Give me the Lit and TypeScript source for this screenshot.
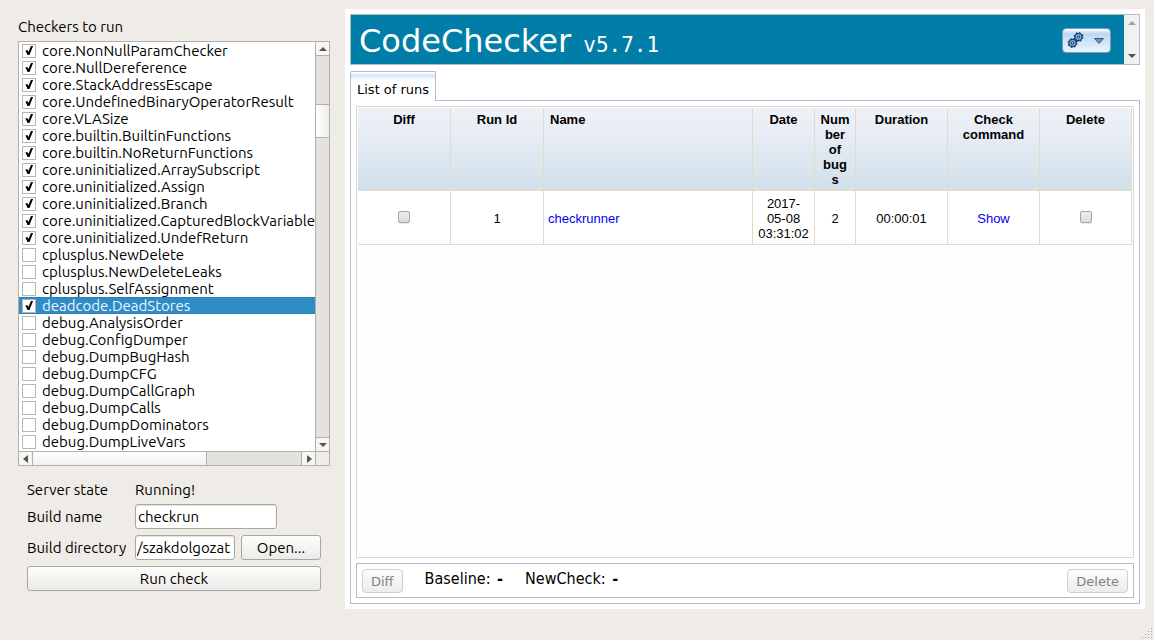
import { LitElement, html, css, svg } from "lit";
import { customElement, state } from "lit/decorators.js";
import { classMap } from "lit/directives/class-map.js";

interface Checker {
  name: string;
  on: boolean;
}

const CHECKED = [
  "core.NonNullParamChecker",
  "core.NullDereference",
  "core.StackAddressEscape",
  "core.UndefinedBinaryOperatorResult",
  "core.VLASize",
  "core.builtin.BuiltinFunctions",
  "core.builtin.NoReturnFunctions",
  "core.uninitialized.ArraySubscript",
  "core.uninitialized.Assign",
  "core.uninitialized.Branch",
  "core.uninitialized.CapturedBlockVariable",
  "core.uninitialized.UndefReturn",
  "deadcode.DeadStores",
];

const CHECKERS: Checker[] = [
  ...CHECKED.slice(0, 12),
  "cplusplus.NewDelete",
  "cplusplus.NewDeleteLeaks",
  "cplusplus.SelfAssignment",
  "deadcode.DeadStores",
  "debug.AnalysisOrder",
  "debug.ConfigDumper",
  "debug.DumpBugHash",
  "debug.DumpCFG",
  "debug.DumpCallGraph",
  "debug.DumpCalls",
  "debug.DumpDominators",
  "debug.DumpLiveVars",
].map((name) => ({ name, on: CHECKED.includes(name) }));

const arrow = (d: string, w = 8, h = 8) => html`
  <svg width=${w} height=${h} viewBox="0 0 ${w} ${h}" aria-hidden="true">
    <path d=${d} fill="currentColor"></path>
  </svg>
`;
const UP = "M0 6 L4 2 L8 6 Z";
const DOWN = "M0 2 L8 2 L4 6 Z";
const LEFT = "M6 0 L6 8 L1 4 Z";
const RIGHT = "M2 0 L7 4 L2 8 Z";

/* Check list with its scroll bars. */
@customElement("checker-list")
export class CheckerList extends LitElement {
  @state() private selected = "deadcode.DeadStores";

  static styles = css`
    :host {
      display: grid;
      grid-template-columns: minmax(0, 1fr) 14px;
      grid-template-rows: auto 14px;
      border: 1px solid #b3afab;
      background: #fff;
    }
    .rows {
      list-style: none;
      margin: 0;
      padding: 0 0 1px;
      overflow: hidden;
    }
    .row {
      display: flex;
      align-items: center;
      gap: 6px;
      height: 17px;
      padding-left: 3px;
      line-height: 17px;
      white-space: nowrap;
    }
    .row.selected {
      background: #308cc6;
      box-shadow: inset 0 1px #2a7fb5, inset 0 -1px #2a7fb5;
      color: #eef5fa;
    }
    .box {
      appearance: none;
      flex: none;
      box-sizing: border-box;
      width: 14px;
      height: 14px;
      margin: 0;
      border: 1px solid #b9b5b0;
      background: #fff;
    }
    .box:checked::before {
      content: "";
      display: block;
      width: 12px;
      height: 12px;
      background: #000;
      clip-path: polygon(20% 50%, 36% 46%, 45% 62%, 66% 12%, 84% 12%, 54% 88%, 38% 88%);
    }
    .bar {
      display: flex;
      background: #e3e2df;
    }
    .vertical {
      flex-direction: column;
      border-left: 1px solid #b3afab;
      width: 13px;
    }
    .horizontal {
      border-top: 1px solid #b3afab;
      height: 13px;
    }
    .corner {
      border-top: 1px solid #b3afab;
      border-left: 1px solid #b3afab;
      background: #efebe7;
    }
    .step {
      display: flex;
      align-items: center;
      justify-content: center;
      flex: none;
      width: 13px;
      height: 13px;
      border: 0;
      padding: 0;
      background: #f7f6f5;
      color: #555;
    }
    .track {
      display: flex;
      flex: 1;
    }
    .vertical .track {
      flex-direction: column;
      border-top: 1px solid #b3afab;
      border-bottom: 1px solid #b3afab;
    }
    .horizontal .track {
      border-left: 1px solid #b3afab;
      border-right: 1px solid #b3afab;
    }
    .before {
      flex: 48;
    }
    .after {
      flex: 300;
    }
    .vertical .thumb {
      flex: 32;
      border-top: 1px solid #b3afab;
      border-bottom: 1px solid #b3afab;
      background: linear-gradient(90deg, #fff, #eeedec);
    }
    .horizontal .thumb {
      flex: 0 0 65%;
      box-sizing: border-box;
      border-right: 1px solid #b3afab;
      background: linear-gradient(#fff, #f2f0ee);
    }
  `;

  render() {
    return html`
      <ul class="rows">
        ${CHECKERS.map(
          (c) => html`<li>
            <label
              class=${classMap({ row: true, selected: c.name === this.selected })}
              @click=${() => (this.selected = c.name)}
              ><input class="box" type="checkbox" .checked=${c.on} /><span>${c.name}</span></label
            >
          </li>`
        )}
      </ul>
      <div class="bar vertical">
        <button class="step" aria-label="Scroll up">${arrow(UP)}</button>
        <div class="track">
          <div class="before"></div>
          <div class="thumb"></div>
          <div class="after"></div>
        </div>
        <button class="step" aria-label="Scroll down">${arrow(DOWN)}</button>
      </div>
      <div class="bar horizontal">
        <button class="step" aria-label="Scroll left">${arrow(LEFT)}</button>
        <div class="track"><div class="thumb"></div></div>
        <button class="step" aria-label="Scroll right">${arrow(RIGHT)}</button>
      </div>
      <div class="corner"></div>
    `;
  }
}

/* Build settings under the list. */
@customElement("build-form")
export class BuildForm extends LitElement {
  static styles = css`
    :host {
      display: block;
      padding: 0 9px;
    }
    .form {
      display: grid;
      grid-template-columns: 102px minmax(0, 1fr);
      column-gap: 6px;
      row-gap: 6px;
      align-items: center;
      margin: 0;
    }
    .state {
      line-height: 20px;
      margin-bottom: -2px;
    }
    .label {
      white-space: nowrap;
    }
    .pair {
      display: grid;
      grid-template-columns: minmax(0, 1fr) 80px;
      gap: 6px;
    }
    .text,
    .button {
      box-sizing: border-box;
      height: 25px;
      border: 1px solid #aaa6a2;
      border-radius: 3px;
      font: inherit;
      color: #000;
    }
    .text {
      width: 100%;
      padding: 0 2px;
      background: #fff;
      box-shadow: inset 0 1px 1px #e4e2e0;
    }
    .name {
      width: 142px;
    }
    .directory {
      padding: 0 1px;
    }
    .button {
      padding: 0;
      background: linear-gradient(#fdfdfd, #edebe9);
    }
    .run {
      grid-column: 1 / -1;
    }
  `;

  render() {
    return html`
      <form class="form" @submit=${(e: Event) => e.preventDefault()}>
        <span class="state">Server state</span>
        <span class="state">Running!</span>
        <label class="label" for="name">Build name</label>
        <input class="text name" id="name" type="text" value="checkrun" />
        <label class="label" for="directory">Build directory</label>
        <div class="pair">
          <input class="text directory" id="directory" type="text" value="/szakdolgozat" />
          <button class="button" type="button">Open...</button>
        </div>
        <button class="button run" type="submit">Run check</button>
      </form>
    `;
  }
}

const gear = (x: number, y: number) => svg`
  <g transform="translate(${x} ${y})">
    <circle r="3.6" fill="#7fa8d2" stroke="#17406e" stroke-width="1.2"></circle>
    <circle r="4.3" fill="none" stroke="#17406e" stroke-width="1.2" stroke-dasharray="1.7 1.68"></circle>
    <circle r="1.2" fill="#c7dcf3" stroke="#17406e" stroke-width="1"></circle>
  </g>
`;

/* Embedded web page: banner, tab and the table of runs. */
@customElement("runs-view")
export class RunsView extends LitElement {
  static styles = css`
    :host {
      display: flex;
      flex-direction: column;
      box-sizing: border-box;
      padding: 5px;
      background: #fff;
      font: 13px/15px "DejaVu Sans", sans-serif;
    }
    .banner {
      display: flex;
      border: 1px solid #b5bcc7;
      background: #007ea7;
      color: #fff;
    }
    .title {
      flex: 1;
      margin: 0;
      padding: 7px 8px 4px;
      font-size: 32px;
      line-height: 38px;
      font-weight: normal;
      white-space: nowrap;
    }
    .version {
      margin-left: 2px;
      font-family: "DejaVu Sans Mono", monospace;
      font-size: 21px;
      line-height: 20px;
    }
    .menu {
      display: flex;
      align-items: center;
      justify-content: space-between;
      box-sizing: border-box;
      width: 49px;
      height: 25px;
      margin: 13px 13px 0 0;
      padding: 0 6px 0 4px;
      border: 1px solid #769dc0;
      border-radius: 4px;
      background: linear-gradient(#fff, #bcd8f4 20%, #e6f1fc 90%);
      color: #44699c;
    }
    .scroll {
      display: flex;
      flex-direction: column;
      justify-content: space-between;
      width: 15px;
      background: #f1f1f1;
    }
    .step {
      display: flex;
      align-items: center;
      justify-content: center;
      width: 15px;
      height: 16px;
      border: 0;
      padding: 0;
      background: none;
      color: #505050;
    }
    .step:disabled {
      color: #a3a3a3;
    }
    .tabs {
      display: flex;
      margin-top: 6px;
    }
    .tab {
      position: relative;
      z-index: 1;
      height: 30px;
      margin-bottom: -1px;
      padding: 6px 6px 0;
      border: 1px solid #b5bcc7;
      border-bottom: 0;
      border-radius: 2px 2px 0 0;
      background: linear-gradient(#fff 1px, #cfe5fa 3px, #fff 8px);
      font: inherit;
      color: #000;
    }
    .pane {
      flex: 1;
      display: flex;
      flex-direction: column;
      gap: 5px;
      padding: 5px;
      border: 1px solid #b5bcc7;
    }
    .grid {
      flex: 1;
      padding: 1px;
      border: 1px solid #d9d9d9;
      background: #fdfdfd;
    }
    .runs {
      width: 100%;
      table-layout: fixed;
      border-spacing: 0;
      font-family: "Liberation Sans", Arial, sans-serif;
      text-align: center;
      color: #000;
    }
    .wide {
      width: 93px;
    }
    .mid {
      width: 92px;
    }
    .date {
      width: 62px;
    }
    .count {
      width: 41px;
    }
    .runs thead {
      background: linear-gradient(#edf2f7, #e8edf5 30%, #d0dfea);
    }
    .runs th,
    .runs td {
      border-right: 1px solid #e5d9c9;
      border-bottom: 1px solid #e5d9c9;
      overflow-wrap: break-word;
    }
    .runs th {
      padding: 4px 5px 3px;
      vertical-align: top;
    }
    .runs td {
      padding: 5px 5px 3px;
      background: #fff;
    }
    .runs .name {
      padding-left: 6px;
      text-align: left;
    }
    .runs td.name {
      padding-left: 4px;
    }
    .link {
      color: #00e;
      text-decoration: none;
    }
    .tick {
      appearance: none;
      box-sizing: border-box;
      width: 12px;
      height: 12px;
      margin: 0;
      border: 1px solid #a5a5a5;
      border-radius: 2px;
      background: linear-gradient(#ededed, #dcdcdc);
      box-shadow: 0 1px #ececec;
      vertical-align: 1px;
    }
    .footer {
      display: flex;
      align-items: flex-start;
      padding: 5px 5px 4px;
      border: 1px solid #b5bcc7;
    }
    .action {
      box-sizing: border-box;
      height: 24px;
      padding: 0 8px;
      border: 1px solid #cfcfcf;
      border-radius: 4px;
      background: linear-gradient(#fdfdfd, #ececec);
      font: inherit;
      color: #818181;
    }
    .pick {
      margin-left: 22px;
      font: 16px/20px "DejaVu Sans Condensed", "DejaVu Sans", sans-serif;
    }
    .pick b {
      margin-left: 2px;
    }
    .remove {
      margin-left: auto;
    }
  `;

  render() {
    return html`
      <header class="banner">
        <h1 class="title">CodeChecker <span class="version">v5.7.1</span></h1>
        <button class="menu" aria-label="Settings">
          <svg width="17" height="17" viewBox="0 0 17 17" aria-hidden="true">
            ${gear(11.5, 5)} ${gear(5.5, 11)}
          </svg>
          <svg width="10" height="6" viewBox="0 0 10 6" aria-hidden="true">
            <path d="M0.5 0.5 H9.5 L5 5.5 Z" fill="#6f96c2" stroke="#36577f"></path>
          </svg>
        </button>
        <div class="scroll">
          <button class="step" aria-label="Scroll up" disabled>${arrow(UP)}</button>
          <button class="step" aria-label="Scroll down">${arrow(DOWN)}</button>
        </div>
      </header>
      <nav class="tabs"><button class="tab">List of runs</button></nav>
      <section class="pane">
        <div class="grid">
          <table class="runs">
            <colgroup>
              <col class="wide" />
              <col class="wide" />
              <col />
              <col class="date" />
              <col class="count" />
              <col class="mid" />
              <col class="mid" />
              <col class="mid" />
            </colgroup>
            <thead>
              <tr>
                <th>Diff</th>
                <th>Run Id</th>
                <th class="name">Name</th>
                <th>Date</th>
                <th>Number of bugs</th>
                <th>Duration</th>
                <th>Check command</th>
                <th>Delete</th>
              </tr>
            </thead>
            <tbody>
              <tr>
                <td><input class="tick" type="checkbox" aria-label="Diff run 1" /></td>
                <td>1</td>
                <td class="name"><a class="link" href="#run">checkrunner</a></td>
                <td>2017-05-08 03:31:02</td>
                <td>2</td>
                <td>00:00:01</td>
                <td><a class="link" href="#show">Show</a></td>
                <td><input class="tick" type="checkbox" aria-label="Delete run 1" /></td>
              </tr>
            </tbody>
          </table>
        </div>
        <footer class="footer">
          <button class="action" disabled>Diff</button>
          <span class="pick">Baseline: <b>-</b></span>
          <span class="pick">NewCheck: <b>-</b></span>
          <button class="action remove" disabled>Delete</button>
        </footer>
      </section>
    `;
  }
}

@customElement("app-root")
export class AppRoot extends LitElement {
  static styles = css`
    :host {
      position: relative;
      display: grid;
      grid-template-columns: 312px minmax(0, 1fr);
      column-gap: 15px;
      box-sizing: border-box;
      min-height: 100vh;
      padding: 9px 9px 31px 18px;
      background: #efebe7;
      color: #000;
      font: 15px/20px Ubuntu, "Noto Sans", sans-serif;
    }
    .side {
      display: flex;
      flex-direction: column;
      padding-top: 8px;
    }
    .heading {
      margin: 0 0 4px;
      font: inherit;
    }
    .build {
      margin-top: 14px;
    }
    .grip {
      position: absolute;
      right: 1px;
      bottom: 1px;
    }
  `;

  render() {
    const dots = [0, 1, 2, 3].flatMap((r) =>
      Array.from({ length: r + 1 }, (_, i) => ({ x: 9 - i * 3, y: r * 3 }))
    );
    return html`
      <aside class="side">
        <h2 class="heading">Checkers to run</h2>
        <checker-list></checker-list>
        <build-form class="build"></build-form>
      </aside>
      <runs-view></runs-view>
      <svg class="grip" width="11" height="11" viewBox="0 0 11 11" aria-hidden="true">
        ${dots.map((d) => svg`<rect x=${d.x} y=${d.y} width="1" height="1" fill="#a8a49f"></rect>`)}
      </svg>
    `;
  }
}
